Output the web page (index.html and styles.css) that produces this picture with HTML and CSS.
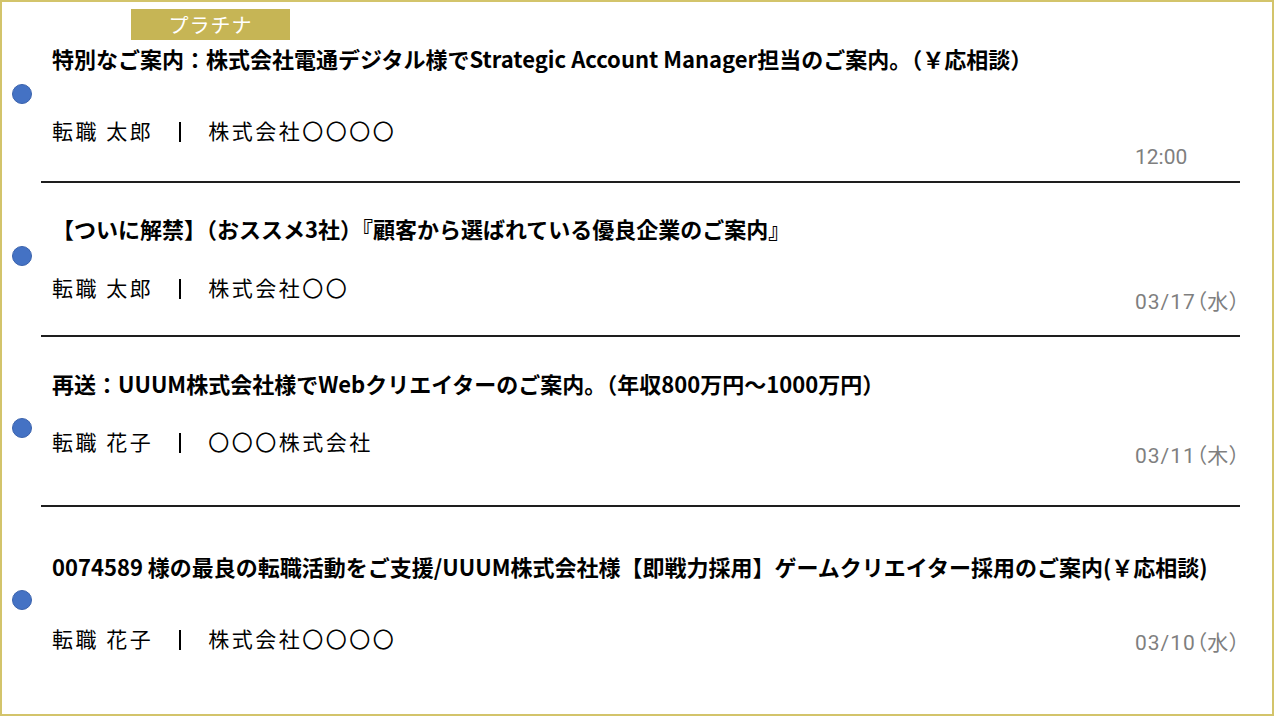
FILE: index.html
```html
<!DOCTYPE html>
<html lang="ja">
<head>
  <meta charset="UTF-8">
  <meta name="viewport" content="width=device-width, initial-scale=1.0">
  <title>スカウト一覧</title>
  <link rel="stylesheet" href="styles.css">
</head>
<body>
  <div class="scout-frame">

    <!-- 1件目（プラチナ） -->
    <div class="scout-item item-first">
      <div class="dot-col"><span class="unread-dot"></span></div>
      <div class="scout-body">
        <div class="badge">プラチナ</div>
        <div class="scout-title">特別なご案内：株式会社電通デジタル様でStrategic Account Manager担当のご案内。（￥応相談）</div>
        <div class="meta-row">
          <div class="meta"><span class="sender">転職 太郎</span><span class="sep"></span><span class="company">株式会社〇〇〇〇</span></div>
          <div class="date">12:00</div>
        </div>
      </div>
    </div>

    <div class="scout-item item-second">
      <div class="dot-col"><span class="unread-dot"></span></div>
      <div class="scout-body">
        <div class="scout-title">【ついに解禁】（おススメ3社）『顧客から選ばれている優良企業のご案内』</div>
        <div class="meta-row">
          <div class="meta"><span class="sender">転職 太郎</span><span class="sep"></span><span class="company">株式会社〇〇</span></div>
          <div class="date">03/17（水）</div>
        </div>
      </div>
    </div>

    <div class="scout-item item-third">
      <div class="dot-col"><span class="unread-dot"></span></div>
      <div class="scout-body">
        <div class="scout-title">再送：UUUM株式会社様でWebクリエイターのご案内。（年収800万円～1000万円）</div>
        <div class="meta-row">
          <div class="meta"><span class="sender">転職 花子</span><span class="sep"></span><span class="company">〇〇〇株式会社</span></div>
          <div class="date">03/11（木）</div>
        </div>
      </div>
    </div>

    <div class="scout-item item-last">
      <div class="dot-col"><span class="unread-dot"></span></div>
      <div class="scout-body">
        <div class="scout-title">0074589 様の最良の転職活動をご支援/UUUM株式会社様【即戦力採用】ゲームクリエイター採用のご案内(￥応相談)</div>
        <div class="meta-row">
          <div class="meta"><span class="sender">転職 花子</span><span class="sep"></span><span class="company">株式会社〇〇〇〇</span></div>
          <div class="date">03/10（水）</div>
        </div>
      </div>
    </div>

  </div>
</body>
</html>
```

FILE: styles.css
```css
body {
  margin: 0;
  background-color: #fff;
  font-family: "Noto Sans CJK JP", sans-serif;
  color: #000;
}

.scout-frame {
  box-sizing: border-box;
  width: 1274px;
  height: 716px;
  border: 2px solid #d3c46b;
}

.scout-item {
  display: flex;
  padding-left: 10px;
  margin-right: 32px;
}

.dot-col {
  width: 29px;
  flex-shrink: 0;
}

.unread-dot {
  display: block;
  box-sizing: border-box;
  width: 20px;
  height: 20px;
  border-radius: 50%;
  background-color: #4472c4;
  border: 1px solid #3b63ad;
}

.scout-body {
  flex: 1;
  padding-left: 11px;
  border-bottom: 2px solid #1e1e1e;
}

.item-last .scout-body {
  border-bottom: none;
}

.badge {
  width: 159px;
  height: 31px;
  margin: 7px 0 0 79px;
  background-color: #c6b555;
  color: #fff;
  font-size: 20px;
  line-height: 31px;
  letter-spacing: 1px;
  text-align: center;
}

.scout-title {
  font-size: 22px;
  font-weight: bold;
  line-height: 30px;
  white-space: nowrap;
}

.meta-row {
  display: flex;
  align-items: flex-start;
}

.meta {
  flex: 1;
  font-size: 21px;
  line-height: 30px;
  letter-spacing: 2.5px;
}

.sep {
  display: inline-block;
  width: 2px;
  height: 20px;
  margin: 0 27px 0 26px;
  background-color: #000;
  vertical-align: -3px;
}

.date {
  flex-shrink: 0;
  width: 105px;
  white-space: nowrap;
  font-family: Roboto, "Noto Sans CJK JP", sans-serif;
  font-feature-settings: "palt";
  font-size: 21px;
  line-height: 24px;
  letter-spacing: 1px;
  color: #7f7f7f;
}

/* 行ごとの間隔 */
.item-first .dot-col { padding-top: 82px; }
.item-first .scout-title { margin-top: 3px; }
.item-first .meta-row { margin-top: 42px; }
.item-first .date { margin-top: 30px; letter-spacing: 0; }
.item-first .scout-body { padding-bottom: 12px; }

.item-second .dot-col { padding-top: 63px; }
.item-second .scout-body { padding-top: 30px; padding-bottom: 21px; }
.item-second .meta-row { margin-top: 29px; }
.item-second .date { margin-top: 18px; }

.item-third .dot-col { padding-top: 81px; }
.item-third .scout-body { padding-top: 31px; padding-bottom: 37px; }
.item-third .meta-row { margin-top: 28px; }
.item-third .date { margin-top: 18px; }

.item-last .dot-col { padding-top: 83px; }
.item-last .scout-body { padding-top: 44px; }
.item-last .meta-row { margin-top: 42px; }
.item-last .date { margin-top: 8px; }
```
